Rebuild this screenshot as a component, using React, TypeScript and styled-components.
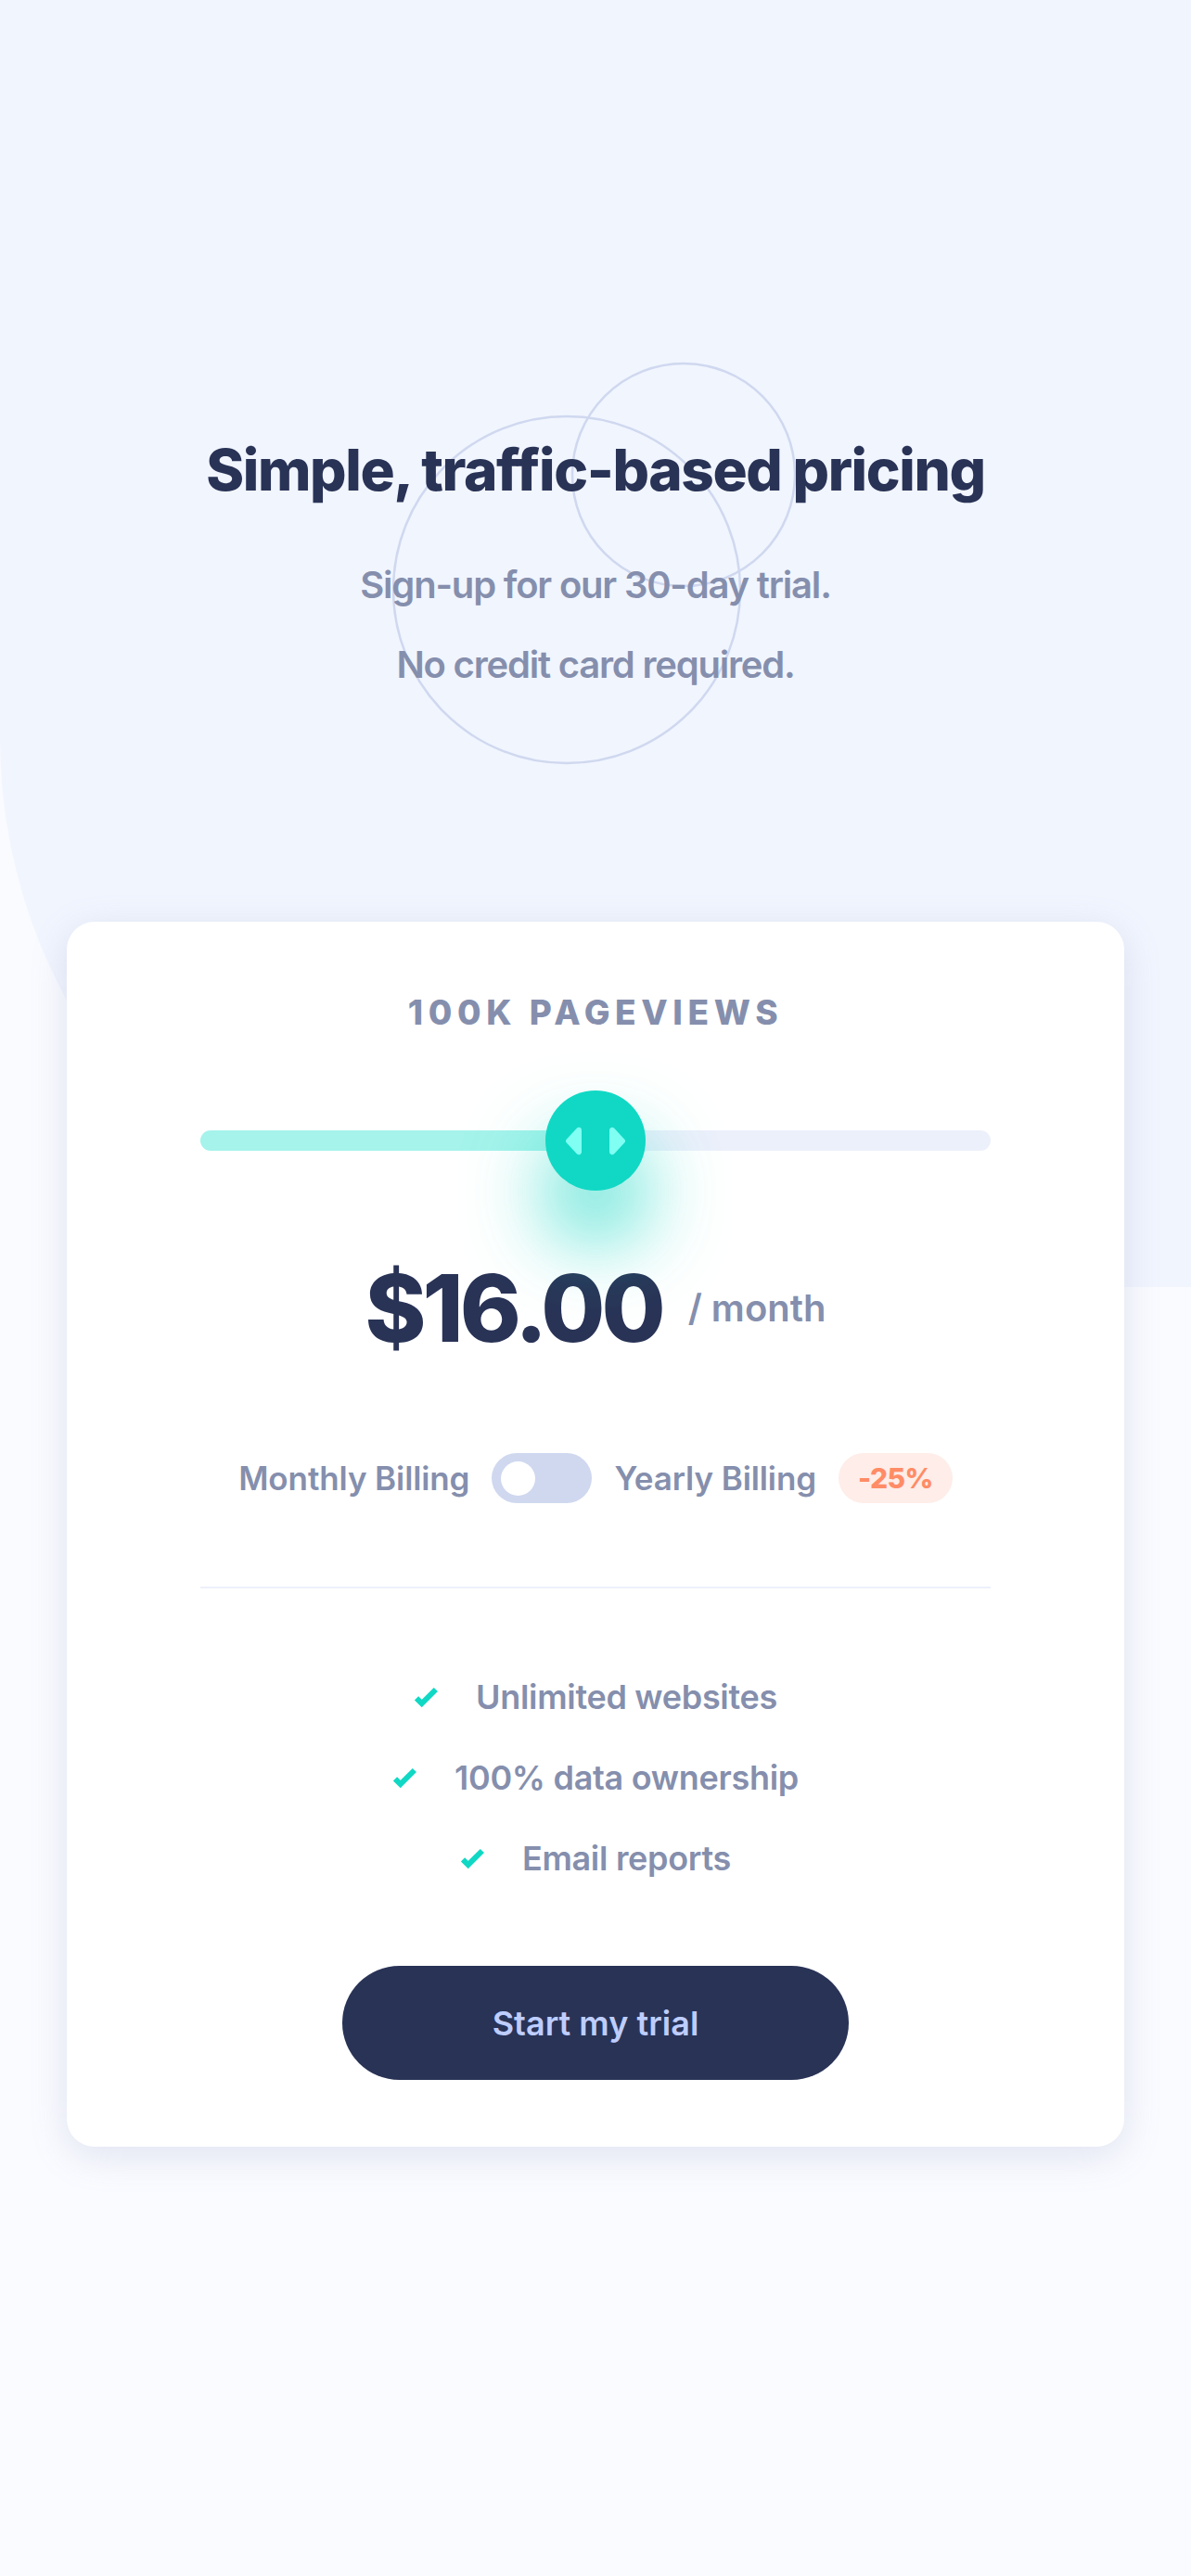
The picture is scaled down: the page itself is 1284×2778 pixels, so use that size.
import React from 'react'
import styled, { createGlobalStyle } from 'styled-components'

const GlobalStyle = createGlobalStyle`
    * { box-sizing: border-box; }
    html, body { margin: 0; padding: 0; }
    body {
        background: #FAFBFF;
        font-family: Inter, "Noto Sans", sans-serif;
        -webkit-font-smoothing: antialiased;
    }
`

const features = ['Unlimited websites', '100% data ownership', 'Email reports']

const CheckIcon = () => (
    <svg width="27" height="24" viewBox="0 0 9 8">
        <path fill="none" stroke="#10D8C4" strokeWidth="2" d="M1 4.134l1.907 1.908L7.949 1" />
    </svg>
)

const SliderIcon = () => (
    <svg width="66" height="39" viewBox="0 0 22 13">
        <path
            d="M16 2.558v7.884a1 1 0 001.735.679l3.639-3.943a1 1 0 000-1.356l-3.64-3.943A1 1 0 0016 2.558zm-10 0v7.884a1 1 0 01-1.736.679L.626 7.178a1 1 0 010-1.356l3.638-3.943A1 1 0 016 2.558z"
            fill="#80FFF3"
            fillRule="evenodd"
        />
    </svg>
)

const App: React.FC = () => {
    const progress = 50

    return (
        <Page>
            <GlobalStyle />
            <Header>
                <Circles width="437" height="440" viewBox="0 0 437 440">
                    <circle cx="188" cy="250" r="187" fill="none" stroke="#CFD8EF" strokeWidth="2.5" />
                    <circle cx="314" cy="126" r="120" fill="none" stroke="#CFD8EF" strokeWidth="2.5" />
                </Circles>
                <Title>Simple, traffic-based pricing</Title>
                <Subtitle>
                    Sign-up for our 30-day trial.
                    <br />
                    No credit card required.
                </Subtitle>
            </Header>

            <Card>
                <Pageviews>100K Pageviews</Pageviews>
                <Slider>
                    <Track progress={progress} />
                    <Thumb>
                        <SliderIcon />
                    </Thumb>
                </Slider>
                <PriceRow>
                    <Price>$16.00</Price>
                    <Period>/ month</Period>
                </PriceRow>
                <BillingRow>
                    <BillingLabel>Monthly Billing</BillingLabel>
                    <Toggle>
                        <Knob />
                    </Toggle>
                    <BillingLabel>Yearly Billing</BillingLabel>
                    <Discount>-25%</Discount>
                </BillingRow>
                <Divider />
                <FeatureList>
                    {features.map((f) => (
                        <Feature key={f}>
                            <CheckIcon />
                            <span>{f}</span>
                        </Feature>
                    ))}
                </FeatureList>
                <TrialButton>Start my trial</TrialButton>
            </Card>
        </Page>
    )
}

const Page = styled.main`
    position: relative;
    min-height: 2778px;
    padding: 476px 72px 0;
    overflow: hidden;

    &::before {
        content: '';
        position: absolute;
        top: 0;
        left: 0;
        right: 0;
        height: 1388px;
        background: #F1F5FE;
        border-bottom-left-radius: 592px;
    }
`

const Header = styled.header`
    position: relative;
    text-align: center;
`

const Circles = styled.svg`
    position: absolute;
    top: -90px;
    left: calc(50% - 219px);
`

const Title = styled.h1`
    position: relative;
    margin: 0;
    font-size: 62px;
    line-height: 62px;
    font-weight: 800;
    letter-spacing: -1.4px;
    color: #293356;
`

const Subtitle = styled.p`
    position: relative;
    margin: 50px 0 0;
    font-size: 40px;
    line-height: 86px;
    font-weight: 600;
    letter-spacing: -1.2px;
    color: #858FAD;
`

const Card = styled.section`
    position: relative;
    margin-top: 234px;
    background: #FFFFFF;
    border-radius: 30px;
    padding: 79px 144px 72px;
    box-shadow: 0 10px 40px rgba(127, 137, 185, 0.2);
`

const Pageviews = styled.h2`
    margin: 0;
    text-align: center;
    text-transform: uppercase;
    font-size: 37px;
    line-height: 37px;
    font-weight: 800;
    letter-spacing: 5.6px;
    color: #858FAD;
`

const Slider = styled.div`
    position: relative;
    margin-top: 66px;
    height: 108px;
    display: flex;
    align-items: center;
`

const Track = styled.div<{ progress: number }>`
    width: 100%;
    height: 22px;
    border-radius: 11px;
    background: linear-gradient(
        to right,
        #A5F3EB ${(p) => p.progress}%,
        #ECF0FB ${(p) => p.progress}%
    );
`

const Thumb = styled.div`
    position: absolute;
    top: 0;
    left: calc(50% - 54px);
    width: 108px;
    height: 108px;
    border-radius: 50%;
    background: #10D8C4;
    display: flex;
    align-items: center;
    justify-content: center;
    box-shadow: 0 55px 85px rgba(16, 213, 194, 0.7);
`

const PriceRow = styled.div`
    margin-top: 77px;
    display: flex;
    justify-content: center;
    align-items: center;
    gap: 28px;
`

const Price = styled.span`
    font-size: 100px;
    line-height: 100px;
    font-weight: 800;
    letter-spacing: -4px;
    color: #293356;
`

const Period = styled.span`
    font-size: 40px;
    line-height: 40px;
    font-weight: 600;
    color: #858FAD;
`

const BillingRow = styled.div`
    margin-top: 106px;
    height: 54px;
    display: flex;
    justify-content: center;
    align-items: center;
    gap: 24px;
`

const BillingLabel = styled.span`
    font-size: 35px;
    font-weight: 600;
    letter-spacing: -0.1px;
    color: #858FAD;
`

const Toggle = styled.div`
    width: 108px;
    height: 54px;
    border-radius: 27px;
    background: #CFD8EF;
    display: flex;
    align-items: center;
    padding-left: 10px;
`

const Knob = styled.span`
    width: 37px;
    height: 37px;
    border-radius: 50%;
    background: #FFFFFF;
`

const Discount = styled.span`
    height: 54px;
    padding: 0 21px;
    border-radius: 27px;
    background: #FEEDE8;
    color: #FF8C66;
    font-size: 30px;
    font-weight: 800;
    letter-spacing: -0.6px;
    display: flex;
    align-items: center;
`

const Divider = styled.hr`
    margin: 90px 0 0;
    border: none;
    height: 2px;
    background: #ECF0FB;
`

const FeatureList = styled.ul`
    margin: 74px 0 0;
    padding: 0;
    list-style: none;
`

const Feature = styled.li`
    display: flex;
    justify-content: center;
    align-items: center;
    gap: 40px;
    font-size: 36px;
    line-height: 87px;
    font-weight: 600;
    letter-spacing: -0.3px;
    color: #858FAD;
`

const TrialButton = styled.button`
    display: block;
    margin: 72px auto 0;
    width: 546px;
    height: 123px;
    border: none;
    border-radius: 62px;
    background: #293356;
    color: #BECDFF;
    font-family: inherit;
    font-size: 36px;
    font-weight: 600;
    cursor: pointer;
`

export default App
